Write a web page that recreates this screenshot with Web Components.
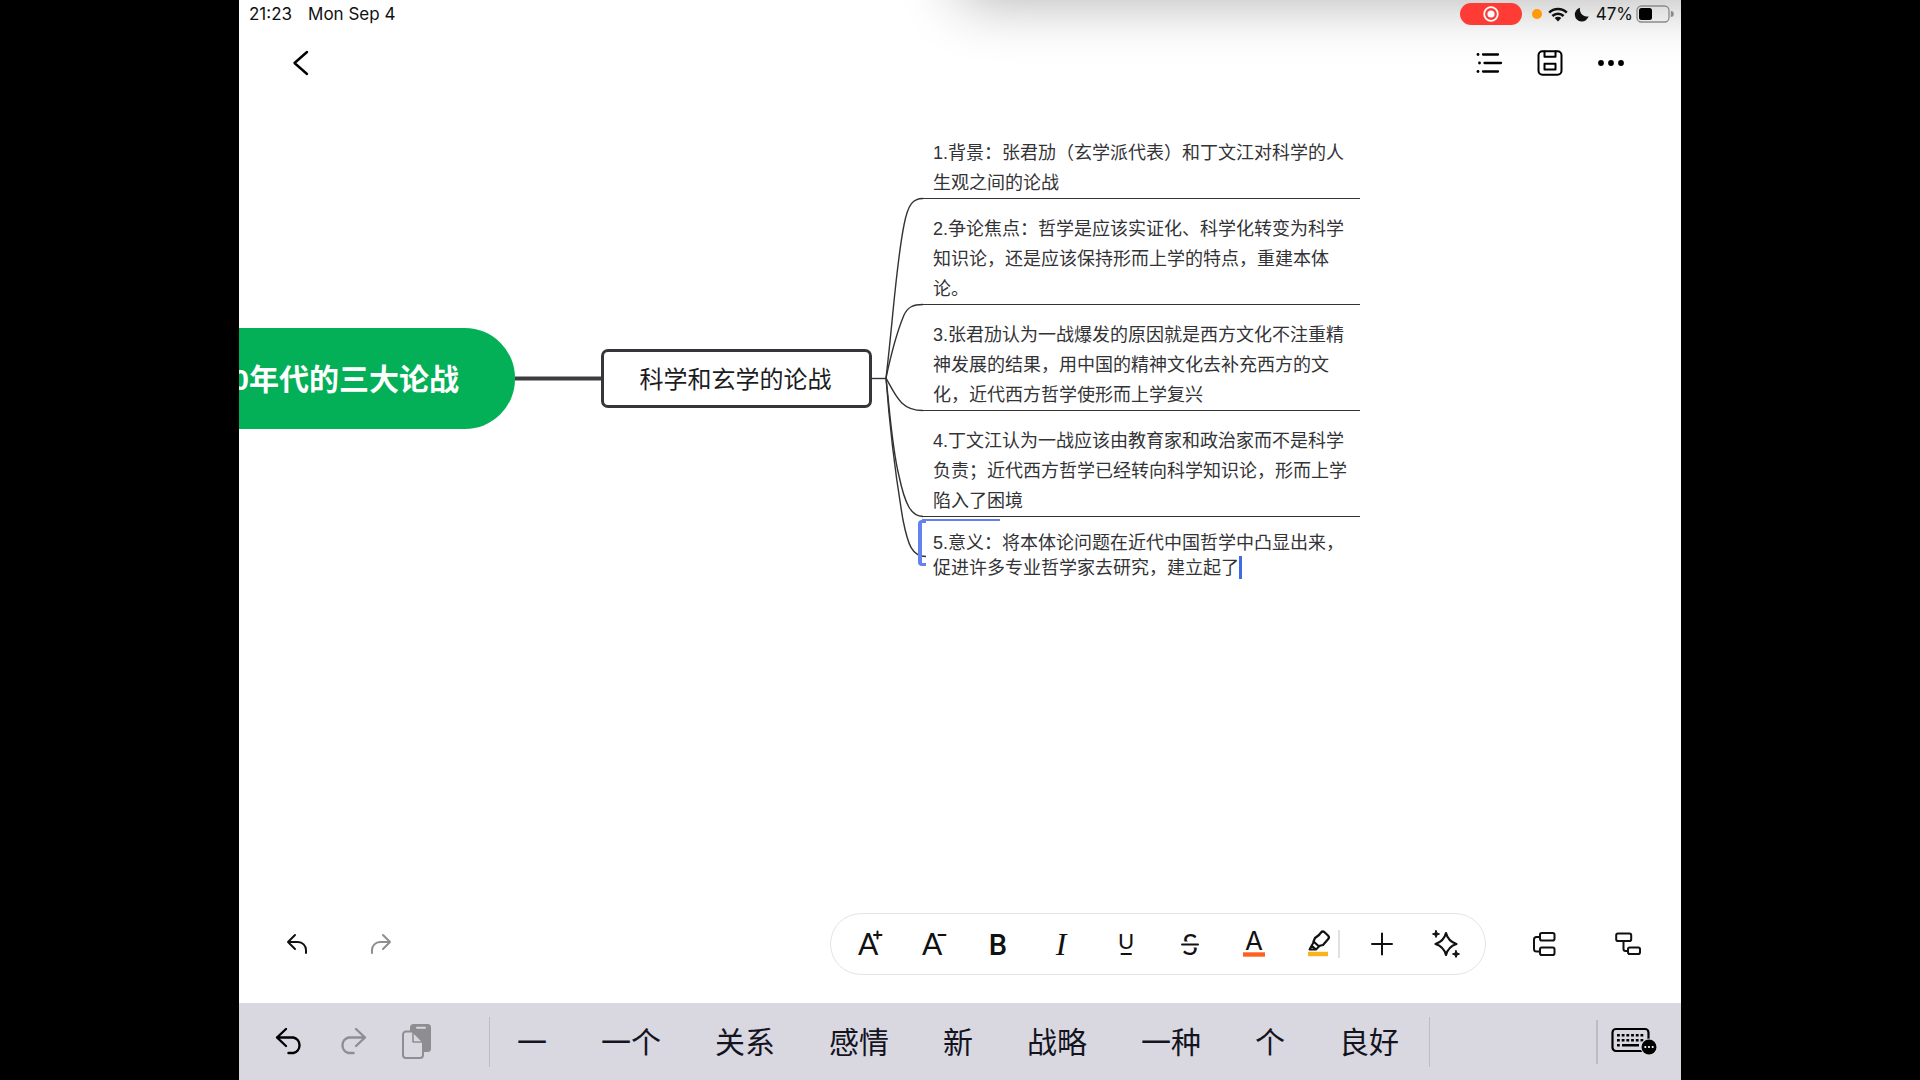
<!DOCTYPE html>
<html lang="zh-CN">
<head>
<meta charset="utf-8">
<title>科学和玄学的论战</title>
<style>
  html, body { height: 100%; margin: 0; background: #000; }
  body {
    box-sizing: border-box;
    padding: 0 239px;
    font-family: "Liberation Sans", "Noto Sans CJK SC", sans-serif;
    color: #1c1c1e;
  }
</style>
</head>
<body>
<mind-app></mind-app>

<script>
const define = (name, html, setup) => {
  const template = document.createElement('template');
  template.innerHTML = html;
  customElements.define(name, class extends HTMLElement {
    constructor() {
      super();
      this.attachShadow({ mode: 'open' }).append(template.content.cloneNode(true));
    }
    connectedCallback() { if (setup) setup(this, this.shadowRoot); }
  });
};

/* Icons: [width, height, markup] */
const ICONS = {
  back: [16, 26, '<path d="M15 2 2.500 13l12.500 11" stroke-width="2.400"/>'],
  list: [26, 22, '<path d="M7 2.500h15M8.500 11H25M7 19.500h15" stroke-width="2.300"/><g fill="currentColor" stroke="none"><circle cx="2" cy="2.500" r="1.400"/><circle cx="3.500" cy="11" r="1.400"/><circle cx="2" cy="19.500" r="1.400"/></g>'],
  save: [26, 26, '<rect x="1.500" y="1.200" width="23" height="23.600" rx="4" stroke-width="2"/><path d="M7.500 1.500v5.200h11V1.500M7.500 13.800h11v5.600h-11z" stroke-width="2"/>'],
  more: [28, 8, '<g fill="currentColor" stroke="none"><circle cx="4" cy="4" r="2.900"/><circle cx="14" cy="4" r="2.900"/><circle cx="24" cy="4" r="2.900"/></g>'],
  undo: [22, 22, '<path d="M9 2 2 9l7 7M2 9h10a8 8 0 0 1 8 8v3"/>'],
  redo: [22, 22, '<path d="M13 2l7 7-7 7M20 9H10a8 8 0 0 0-8 8v3"/>'],
  kundo: [28, 28, '<path d="M11 1 2 9.500l9 8.500M2 9.500h16.500a8 8 0 0 1 0 15.500h-5" stroke-width="2.400"/>'],
  kredo: [28, 28, '<path d="M17 1l9 8.500-9 8.500M26 9.500H9.500a8 8 0 0 0 0 15.500h5" stroke-width="2.400"/>'],
  paste: [30, 36, '<rect x="8" y="0" width="21" height="28" rx="3.500" fill="currentColor" stroke="none"/><path d="M15 3.800h8" stroke="#d9d8e1" stroke-width="2"/><path d="M4 7.500h7.500l9.500 10.500v13a3 3 0 0 1-3 3H4a3 3 0 0 1-3-3v-20.500a3 3 0 0 1 3-3z" fill="#d9d8e1"/><path d="M11 8v10h10z" fill="#d9d8e1" stroke-width="1.600"/>'],
  plus: [24, 24, '<path d="M12 1.500v21M2 12h20"/>'],
  marker: [22, 28, '<path d="M12 5l2-2.500a2.500 2.500 0 0 1 3.500-.3l3.500 3.300a2.500 2.500 0 0 1 .2 3.500L16 15l-4.500 1-5-4.500L8 8z" stroke-width="2.200"/><path d="M7 11.500l-4.500 8h6.500l3.500-3.500M4.500 15.500l4 3.500"/><path d="M1 24h20" stroke="#f9b31c" stroke-width="4.400" stroke-linecap="butt"/>'],
  spark: [30, 28, '<path d="M15 3c1.500 6 4.500 9 10.500 11-6 2-9 5-10.500 11-1.500-6-4.500-9-10.500-11 6-2 9-5 10.500-11z" stroke-width="2.200"/><path d="M5 .5 6 3l2.500 1L6 5 5 7.500 4 5 1.500 4 4 3zM25 20.500l1 2.500 2.500 1-2.500 1-1 2.500-1-2.500-2.500-1 2.500-1z" fill="currentColor" stroke-width="1"/>'],
  branch: [24, 26, '<rect x="8" y="2" width="14.500" height="7.600" rx="1.800"/><rect x="8" y="16.500" width="14.500" height="7.600" rx="1.800"/><path d="M8 6H4.500a2.500 2.500 0 0 0-2.500 2.500V18a2.500 2.500 0 0 0 2.500 2.500H8"/>'],
  child: [26, 24, '<rect x="1.200" y="1.500" width="15" height="7.600" rx="1.800"/><rect x="13" y="15.500" width="12" height="6.600" rx="1.800"/><path d="M8.500 9v8a2 2 0 0 0 2 2H13"/>'],
  bigger: [30, 30, '<text x="3" y="26" font-size="30">A</text><path d="M22.500 2.500v7M19 6h7.500"/>'],
  smaller: [30, 30, '<text x="3" y="26" font-size="30">A</text><path d="M19.500 6h7"/>'],
  bold: [30, 30, '<text x="15" y="26" font-size="29" font-weight="500" text-anchor="middle" style="font-family:Roboto">B</text>'],
  italic: [30, 30, '<text x="14" y="26" font-size="32" font-style="italic" text-anchor="middle" style="font-family:Liberation Serif">I</text>'],
  underline: [30, 30, '<text x="15" y="20" font-size="22" text-anchor="middle">U</text><path d="M10.500 25h9.500"/>'],
  strike: [30, 30, '<text x="15" y="26" font-size="29" text-anchor="middle">S</text><path d="M7 15.500h16" stroke="#fff" stroke-width="6"/><path d="M7 15.500h16"/>'],
  colour: [30, 30, '<text x="15" y="21" font-size="26" text-anchor="middle" style="font-family:Inter">A</text><path d="M4 25.500h22" stroke="#fb6221" stroke-width="4.400" stroke-linecap="butt"/>'],
  wifi: [20, 15, '<g stroke-width="2.600" stroke-linecap="butt"><path d="M1.200 5.600a12.600 12.600 0 0 1 17.600 0M4.400 9a8 8 0 0 1 11.200 0"/></g><path d="M10 14.500l-3.300-3.400a4.700 4.700 0 0 1 6.600 0z" fill="currentColor" stroke="none"/>'],
  moon: [14, 14, '<path d="M5 .8A7 7 0 1 0 13.600 9.300 7.200 7.200 0 0 1 5 .8z" fill="currentColor" stroke="none"/>'],
  battery: [37, 18, '<rect x="1" y="1" width="32" height="16" rx="4.500" stroke="#8a8a8e" stroke-width="1.300"/><rect x="3" y="3" width="13" height="12" rx="2.500" fill="#000" stroke="none"/><path d="M34.800 6v6a3 3 0 0 0 0-6z" fill="#8a8a8e" stroke="none"/>'],
  record: [16, 16, '<circle cx="8" cy="8" r="6.800" stroke-width="1.800"/><circle cx="8" cy="8" r="3.600" fill="currentColor" stroke="none"/>'],
  keyboard: [46, 34, '<rect x="1.500" y="4" width="36" height="22" rx="3.500" stroke-width="2.200"/><path d="M6 10.200h27M6 15.200h27" stroke-width="2.600" stroke-dasharray="2.800 1.900" stroke-linecap="butt"/><path d="M6 20.200h2.800M11 20.200h17" stroke-width="2.400" stroke-linecap="butt"/><circle cx="38" cy="22" r="8.600" fill="#d9d8e1" stroke="none"/><circle cx="38" cy="22" r="7.500" fill="#000" stroke="none"/><g fill="#fff" stroke="none"><circle cx="34.300" cy="22" r="1.100"/><circle cx="38" cy="22" r="1.100"/><circle cx="41.700" cy="22" r="1.100"/></g>']
};

define('ui-icon', `
  <style>
    :host { display: inline-flex; }
    svg { display: block; overflow: visible; fill: none; stroke: currentColor; stroke-width: 2; stroke-linecap: round; stroke-linejoin: round; }
    text { fill: currentColor; stroke: none; font-family: Lato, sans-serif; }
  </style>
  <span></span>`, (el, root) => {
  const [w, h, body] = ICONS[el.getAttribute('name')];
  root.querySelector('span').innerHTML = `<svg width="${w}" height="${h}" viewBox="0 0 ${w} ${h}" aria-hidden="true">${body}</svg>`;
});

define('icon-button', `
  <style>
    :host { display: block; flex: none; width: 64px; height: 60px; }
    button { display: flex; align-items: center; justify-content: center; width: 100%; height: 100%;
      margin: 0; padding: 0; border: 0; background: none; color: inherit; }
    :host([dim]) { color: #8d8d92; }
  </style>
  <button type="button"></button>`, (el, root) => {
  const button = root.querySelector('button');
  const icon = document.createElement('ui-icon');
  icon.setAttribute('name', el.getAttribute('icon'));
  button.replaceChildren(icon);
  button.setAttribute('aria-label', el.getAttribute('label'));
});

define('status-bar', `
  <style>
    :host { display: flex; align-items: center; height: 28px; padding: 0 8px 0 10px;
      font: 17px/28px Inter, sans-serif; color: #111; }
    .date { margin-left: 16px; }
    .right { display: flex; align-items: center; margin-left: auto; }
    .rec { display: flex; align-items: center; justify-content: center; width: 62px; height: 22px;
      border-radius: 11px; background: #fe3b34; color: #fff; }
    .dot { width: 10px; height: 10px; margin: 0 6px 0 10px; border-radius: 50%; background: #ff9a0a; }
    .moon { margin: 0 7px 0 7px; }
    .battery { margin-left: 3px; }
  </style>
  <span>21:23</span><span class="date">Mon Sep 4</span>
  <div class="right">
    <span class="rec"><ui-icon name="record"></ui-icon></span>
    <span class="dot"></span>
    <ui-icon name="wifi"></ui-icon>
    <ui-icon class="moon" name="moon"></ui-icon>
    <span>47%</span>
    <ui-icon class="battery" name="battery"></ui-icon>
  </div>`);

define('nav-bar', `
  <style>
    :host { display: flex; align-items: center; height: 70px; padding: 0 40px 0 30px; color: #000; }
    .actions { display: flex; margin-left: auto; }
    icon-button { width: 61px; }
  </style>
  <icon-button icon="back" label="返回"></icon-button>
  <div class="actions">
    <icon-button icon="list" label="大纲"></icon-button>
    <icon-button icon="save" label="保存"></icon-button>
    <icon-button icon="more" label="更多"></icon-button>
  </div>`);

define('mind-topic', `
  <style>
    :host { display: block; padding-top: 15px; border-bottom: 1px solid #333; }
    p { margin: 0; padding-left: 10px; color: #333336; font-size: 18px; line-height: 30px; white-space: pre; }
    :host([editing]) { padding-top: 14px; border-bottom: 0; }
    :host([editing]) p { line-height: 25px; }
  </style>
  <p><slot></slot></p>`);

define('mind-map', `
  <style>
    :host { display: block; position: relative; flex: 1; overflow: hidden; }
    svg { position: absolute; left: 0; top: 0; width: 100%; height: 100%; fill: none; stroke: #333; stroke-width: 1.400; }
    .root, .main { position: absolute; display: flex; align-items: center; box-sizing: border-box; white-space: nowrap; }
    .root { left: -100px; top: 230px; width: 376px; height: 101px; padding: 0 56px 4px 0; justify-content: flex-end;
      border-radius: 0 50px 50px 0; background: #04b057; color: #fff; font-size: 30px; font-weight: 700; }
    .main { left: 362px; top: 251px; width: 271px; height: 59px; justify-content: center; padding: 0 2px 2px 0;
      border: 3px solid #36363a; border-radius: 7px; background: #fff; font-size: 24px; }
    .leaves { position: absolute; left: 684px; top: 25px; width: 437px; }
    .caret { display: inline-block; width: 3px; height: 23px; margin-right: -3px; vertical-align: -5px; background: #3f6be3; }
    .bracket { position: absolute; left: 679px; top: 422px; width: 4px; height: 40px; border: 4px solid #6482ee;
      border-right: 0; border-width: 3px 0 3px 4px; border-radius: 4px 0 0 4px; }
    .edge { position: absolute; left: 683px; top: 421px; width: 78px; height: 2px; background: #6482ee; }
  </style>
  <svg aria-hidden="true">
    <path d="M276 280.500H362" stroke-width="4" stroke="#3c3c41"/>
    <path d="M633 280.500H647"/>
    <path d="M647 280C654 222 657 167 665 127C669 106 674 100.500 684 100.500"/>
    <path d="M647 280C654 247 660 229 665 217C669 209 674 206.500 684 206.500"/>
    <path d="M647 280C657 298 662 312.500 684 312.500"/>
    <path d="M647 280C651 315 653 350 660 378C666 406 672 418.500 684 418.500"/>
    <path d="M647 280C650 320 656 375 664 422C669 447 673 458.500 687 458.500"/>
  </svg>
  <div class="root">0年代的三大论战</div>
  <div class="main">科学和玄学的论战</div>
  <div class="leaves">
    <mind-topic>1.背景：张君劢（玄学派代表）和丁文江对科学的人
生观之间的论战</mind-topic>
    <mind-topic>2.争论焦点：哲学是应该实证化、科学化转变为科学
知识论，还是应该保持形而上学的特点，重建本体
论。</mind-topic>
    <mind-topic>3.张君劢认为一战爆发的原因就是西方文化不注重精
神发展的结果，用中国的精神文化去补充西方的文
化，近代西方哲学使形而上学复兴</mind-topic>
    <mind-topic>4.丁文江认为一战应该由教育家和政治家而不是科学
负责；近代西方哲学已经转向科学知识论，形而上学
陷入了困境</mind-topic>
    <mind-topic editing>5.意义：将本体论问题在近代中国哲学中凸显出来，
促进许多专业哲学家去研究，建立起了<span class="caret"></span></mind-topic>
  </div>
  <div class="bracket"></div><div class="edge"></div>`);

define('format-bar', `
  <style>
    :host { display: flex; align-items: center; padding: 0 11px 28px 16px; color: #111; }
    .pill { display: flex; align-items: center; height: 60px; margin: 0 16px 0 auto; padding: 0 7px;
      border: 1px solid #e4e4e8; border-radius: 31px; background: #fff; }
    .wide { width: 84px; }
    .rule { width: 2px; height: 28px; margin: 0 10px 0 -12px; background: #e0e0e4; }
  </style>
  <icon-button class="wide" icon="undo" label="撤销"></icon-button>
  <icon-button class="wide" icon="redo" label="重做" dim></icon-button>
  <div class="pill">
    <icon-button icon="bigger" label="增大字号"></icon-button>
    <icon-button icon="smaller" label="减小字号"></icon-button>
    <icon-button icon="bold" label="粗体"></icon-button>
    <icon-button icon="italic" label="斜体"></icon-button>
    <icon-button icon="underline" label="下划线"></icon-button>
    <icon-button icon="strike" label="删除线"></icon-button>
    <icon-button icon="colour" label="文字颜色"></icon-button>
    <icon-button icon="marker" label="高亮"></icon-button>
    <span class="rule"></span>
    <icon-button icon="plus" label="插入"></icon-button>
    <icon-button icon="spark" label="智能"></icon-button>
  </div>
  <icon-button class="wide" icon="branch" label="同级主题"></icon-button>
  <icon-button class="wide" icon="child" label="子主题"></icon-button>`);

define('candidate-word', `
  <style>
    :host { display: block; }
    button { margin: 0; padding: 0 27px 4px; border: 0; background: none; color: #14141f;
      font: 30px/48px "Noto Sans CJK SC", sans-serif; white-space: nowrap; }
  </style>
  <button type="button"><slot></slot></button>`);

define('keyboard-bar', `
  <style>
    :host { display: flex; align-items: center; height: 77px; padding: 0 22px 0 18px; background: #d9d8e1; color: #000; }
    .words { display: flex; align-items: center; height: 50px; margin-left: 40px; padding-right: 3px;
      border: 1px solid #bdbcc4; border-width: 0 1px; }
    .key { display: flex; align-items: center; height: 44px; margin-left: auto; padding-left: 11px; border-left: 2px solid #bdbcc4; }
    .key icon-button { width: 50px; }
  </style>
  <icon-button icon="kundo" label="撤销"></icon-button>
  <icon-button icon="kredo" label="重做" dim></icon-button>
  <icon-button icon="paste" label="粘贴" dim></icon-button>
  <div class="words">
    <candidate-word>一</candidate-word><candidate-word>一个</candidate-word><candidate-word>关系</candidate-word>
    <candidate-word>感情</candidate-word><candidate-word>新</candidate-word><candidate-word>战略</candidate-word>
    <candidate-word>一种</candidate-word><candidate-word>个</candidate-word><candidate-word>良好</candidate-word>
  </div>
  <div class="key"><icon-button icon="keyboard" label="键盘"></icon-button></div>`);

define('mind-app', `
  <style>
    :host { display: flex; flex-direction: column; position: relative; height: 100%; overflow: hidden; background: #fff; }
    .shade { position: absolute; left: 50%; right: -80px; top: -100px; height: 100px;
      box-shadow: 0 0 60px rgba(0, 0, 0, .32); pointer-events: none; }
    status-bar, nav-bar { position: relative; }
  </style>
  <div class="shade"></div>
  <status-bar></status-bar>
  <nav-bar></nav-bar>
  <mind-map></mind-map>
  <format-bar></format-bar>
  <keyboard-bar></keyboard-bar>`);
</script>
</body>
</html>
